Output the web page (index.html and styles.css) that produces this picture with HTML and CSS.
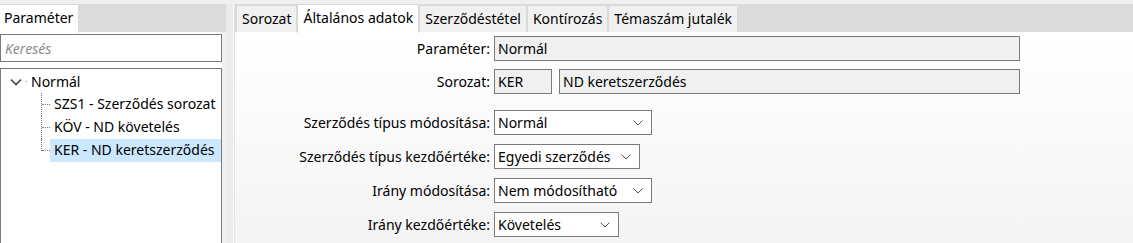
FILE: index.html
```html
<!DOCTYPE html>
<html>
<head>
    <title>Paraméter</title>
    <meta charset="utf-8" />
    <link rel="stylesheet" href="styles.css">
</head>
<body>
    <div class="window">
        <aside class="left-pane">
            <div class="tab-strip">
                <div class="tab active">Paraméter</div>
            </div>
            <div class="left-body">
                <input class="search" type="search" placeholder="Keresés" />
                <div class="tree">
                    <div class="tree-root">
                        <svg class="expander" width="12" height="8" viewBox="0 0 12 8"><path d="M1 1.5 L6 6.5 L11 1.5" fill="none" stroke="#404040" stroke-width="1.6"/></svg>
                        <span class="root-dot"></span>
                        <span class="node-label">Normál</span>
                    </div>
                    <ul class="tree-children">
                        <li><span class="node-label">SZS1 - Szerződés sorozat</span></li>
                        <li><span class="node-label">KÖV - ND követelés</span></li>
                        <li class="selected"><span class="node-label">KER - ND keretszerződés</span></li>
                    </ul>
                </div>
            </div>
        </aside>
        <div class="splitter"></div>
        <main class="right-pane">
            <div class="tab-strip tabs">
                <div class="tab">Sorozat</div>
                <div class="tab active">Általános adatok</div>
                <div class="tab">Szerződéstétel</div>
                <div class="tab">Kontírozás</div>
                <div class="tab">Témaszám jutalék</div>
            </div>
            <div class="tab-page">
                <div class="form-grid fields">
                    <label class="field-label">Paraméter:</label>
                    <div class="field-row">
                        <div class="textbox wide">Normál</div>
                    </div>
                    <label class="field-label">Sorozat:</label>
                    <div class="field-row">
                        <div class="textbox code">KER</div>
                        <div class="textbox name">ND keretszerződés</div>
                    </div>
                </div>
                <div class="form-grid choices">
                    <label class="field-label">Szerződés típus módosítása:</label>
                    <div class="field-row">
                        <div class="combo w158">Normál<svg class="combo-arrow" width="10" height="6" viewBox="0 0 10 6"><path d="M0.5 0.5 L5 5 L9.5 0.5" fill="none" stroke="#555" stroke-width="1"/></svg></div>
                    </div>
                    <label class="field-label">Szerződés típus kezdőértéke:</label>
                    <div class="field-row">
                        <div class="combo w146">Egyedi szerződés<svg class="combo-arrow" width="10" height="6" viewBox="0 0 10 6"><path d="M0.5 0.5 L5 5 L9.5 0.5" fill="none" stroke="#555" stroke-width="1"/></svg></div>
                    </div>
                    <label class="field-label">Irány módosítása:</label>
                    <div class="field-row">
                        <div class="combo w158">Nem módosítható<svg class="combo-arrow" width="10" height="6" viewBox="0 0 10 6"><path d="M0.5 0.5 L5 5 L9.5 0.5" fill="none" stroke="#555" stroke-width="1"/></svg></div>
                    </div>
                    <label class="field-label">Irány kezdőértéke:</label>
                    <div class="field-row">
                        <div class="combo w125">Követelés<svg class="combo-arrow" width="10" height="6" viewBox="0 0 10 6"><path d="M0.5 0.5 L5 5 L9.5 0.5" fill="none" stroke="#555" stroke-width="1"/></svg></div>
                    </div>
                </div>
            </div>
        </main>
    </div>
</body>
</html>
```

FILE: styles.css
```css
html, body{
    margin:0;
    padding:0;
    height:100%;
}
body{
    background:#f0f0f0;
    font-family:"Noto Sans", "Open Sans", sans-serif;
    font-size:14px;
    color:#000;
    overflow:hidden;
}
.window{
    display:flex;
    height:100%;
    border-top:3px solid #f0f0f0;
    box-sizing:border-box;
}

/* tab strips */
.tab-strip{
    display:flex;
    align-items:flex-end;
    height:28px;
    margin-top:1px;
    background:#dcdcdc;
    flex-shrink:0;
}
.tab{
    height:27px;
    line-height:26px;
    padding:0 5px;
    box-sizing:border-box;
    background:#f0f0f0;
    border:1px solid #d9d9d9;
    border-bottom:none;
    white-space:nowrap;
}
.tab.active{
    height:29px;
    line-height:26px;
    margin-bottom:-1px;
    background:#fff;
    border-color:#d9d9d9;
    position:relative;
}

/* left */
.left-pane{
    width:226px;
    display:flex;
    flex-direction:column;
    flex-shrink:0;
}
.left-pane .tab{
    padding:0 5px 0 4px;
    border-left:none;
}
.left-body{
    width:222px;
    flex:1;
    background:#fff;
    padding-top:2px;
    display:flex;
    flex-direction:column;
}
.search{
    height:28px;
    margin:0;
    border:1px solid #7a7a7a;
    padding:0 0 0 4px;
    box-sizing:border-box;
    font-family:inherit;
    font-size:14px;
    outline:none;
    width:222px;
}
.search::placeholder{
    color:#8c8c8c;
    font-style:italic;
}
.tree{
    margin-top:6px;
    flex:1;
    border:1px solid #7a7a7a;
    border-bottom:none;
    padding-top:1px;
}
.tree-root{
    display:flex;
    align-items:center;
    height:23px;
}
.expander{
    margin-left:9px;
}
.root-dot{
    width:1px;
    height:1px;
    background:#888;
    margin:0 4px 0 4px;
}
.tree-children{
    list-style:none;
    margin:0;
    padding:0;
}
.tree-children li{
    position:relative;
    height:23px;
    padding-left:49px;
}
.tree-children li::before{
    content:"";
    position:absolute;
    left:40px;
    top:0;
    height:100%;
    border-left:1px dotted #777;
}
.tree-children li:last-child::before{
    height:12px;
}
.tree-children li::after{
    content:"";
    position:absolute;
    left:41px;
    top:11px;
    width:8px;
    border-top:1px dotted #777;
}
.tree-children .node-label{
    display:block;
    height:23px;
    line-height:22px;
    padding-left:4px;
    white-space:nowrap;
    overflow:hidden;
}
.tree-children li.selected .node-label{
    background:#cce8ff;
}

.splitter{
    width:7px;
    background:#ececec;
    border-right:1px solid #fafafa;
    flex-shrink:0;
}

/* right */
.right-pane{
    flex:1;
    display:flex;
    flex-direction:column;
}
.tabs{
    padding-left:2px;
}
.tab-page{
    flex:1;
    background:linear-gradient(#ffffff, #f4f4f4);
    border-left:1px solid #e3e3e3;
    padding-top:4px;
}
.form-grid{
    display:grid;
    grid-template-columns:255px auto;
    column-gap:4px;
    align-items:center;
}
.fields{
    row-gap:8px;
}
.choices{
    row-gap:9px;
    margin-top:16px;
}
.field-label{
    text-align:right;
    white-space:nowrap;
}
.field-row{
    display:flex;
    gap:7px;
}
.textbox{
    height:25px;
    line-height:23px;
    box-sizing:border-box;
    border:1px solid #7a7a7a;
    background:#f0f0f0;
    padding-left:3px;
    white-space:nowrap;
}
.textbox.wide{ width:526px; }
.textbox.code{ width:58px; }
.textbox.name{ width:461px; }
.combo{
    position:relative;
    height:25px;
    line-height:23px;
    box-sizing:border-box;
    border:1px solid #7a7a7a;
    background:#fff;
    padding-left:3px;
    white-space:nowrap;
}
.combo-arrow{
    position:absolute;
    right:8px;
    top:9px;
}
.w158{ width:158px; }
.w146{ width:146px; }
.w125{ width:125px; }
```
